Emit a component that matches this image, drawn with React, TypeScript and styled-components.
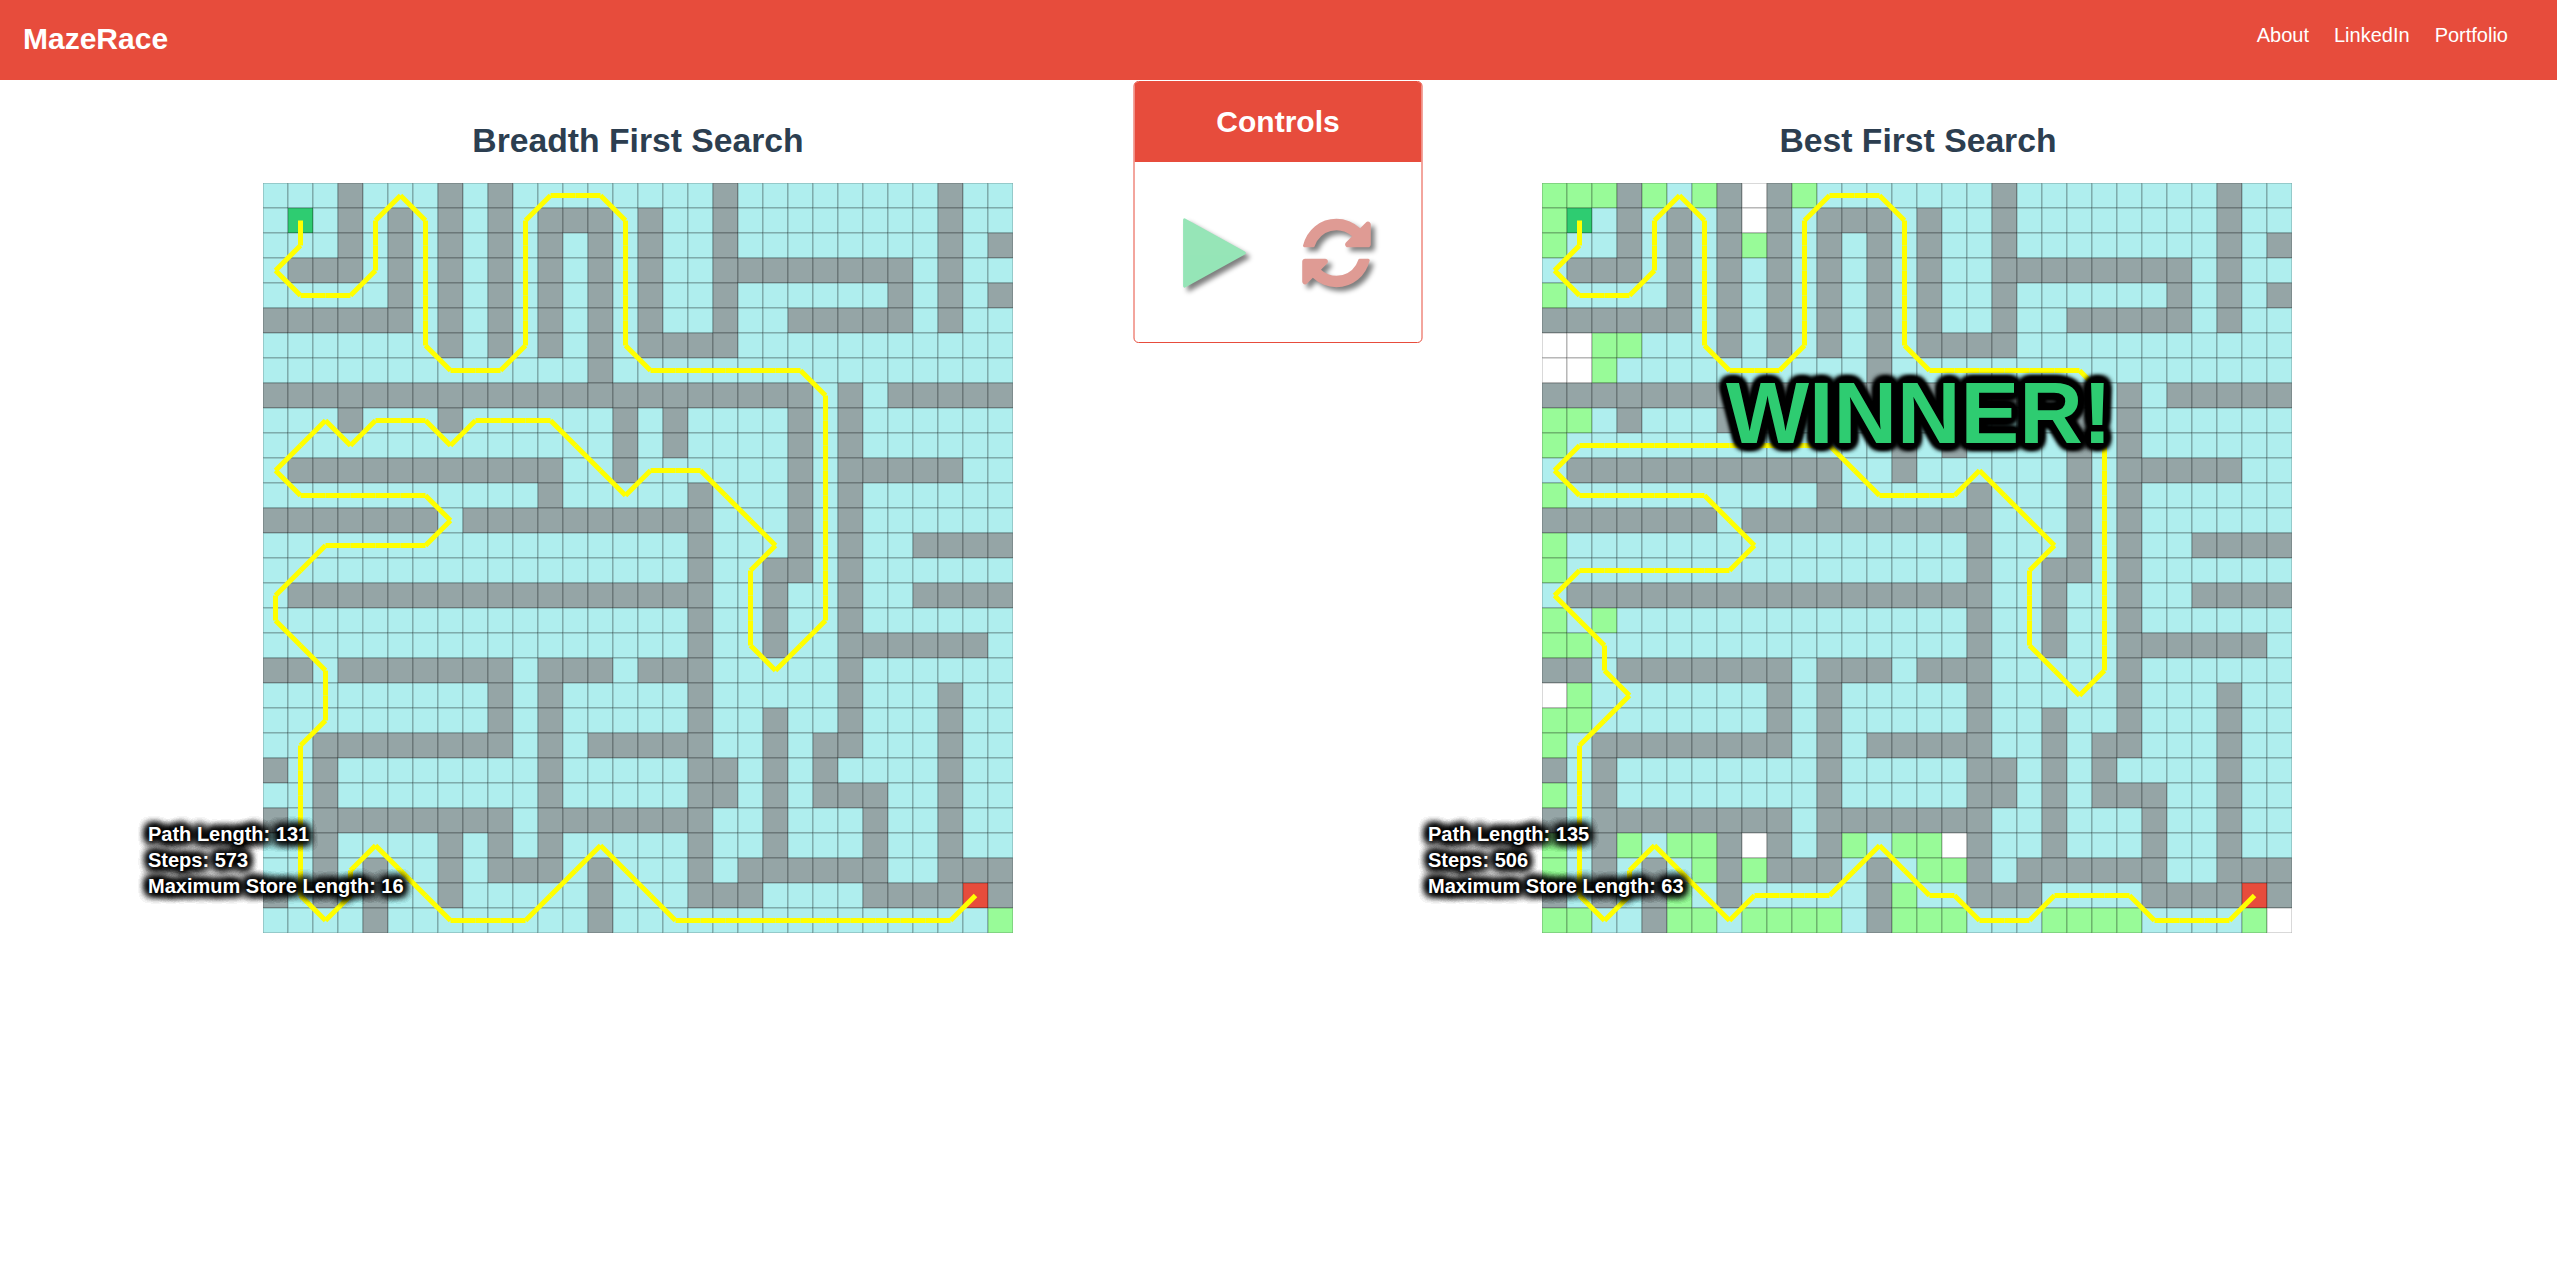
import React from 'react';
import styled, { createGlobalStyle } from 'styled-components';

const CELL = 25;
const SIZE = 30;

// A solid dark rim around large text: soft copies spread evenly on a circle.
const rim = (radius: number, blur: number, count: number): string =>
  Array.from({ length: count }, (_, i) => {
    const angle = (i / count) * Math.PI * 2;
    const x = (Math.cos(angle) * radius).toFixed(2);
    const y = (Math.sin(angle) * radius).toFixed(2);
    return `${x}px ${y}px ${blur}px #000`;
  }).join(', ');

const GlobalStyle = createGlobalStyle`
  html, body { margin: 0; padding: 0; background: #ffffff; }
  body { font-family: "Liberation Sans", Arial, Helvetica, sans-serif; overflow: hidden; }
  * { box-sizing: border-box; }
`;

const Header = styled.header`
  display: flex;
  justify-content: space-between;
  align-items: flex-start;
  height: 80px;
  padding: 23px 49px 0 23px;
  background: #e74c3c;
  color: #ffffff;
`;

const Brand = styled.h1`
  margin: 0;
  font-size: 30px;
  line-height: 32px;
  font-weight: bold;
`;

const Nav = styled.nav`
  display: flex;
  gap: 25px;
`;

const NavLink = styled.a`
  color: #ffffff;
  font-size: 20px;
  line-height: 24px;
  text-decoration: none;
`;

const Race = styled.main`
  position: relative;
  display: grid;
  grid-template-columns: 1276px 1276px;
  column-gap: 3px;
`;

const Panel = styled.section`
  position: relative;
  display: flex;
  flex-direction: column;
  align-items: center;
  padding-top: 40px;
`;

const Title = styled.h2<{ $indent: number }>`
  margin: 0 0 23px;
  padding-left: ${(p) => p.$indent}px;
  color: #2c3e50;
  font-size: 33.7px;
  line-height: 40px;
  font-weight: bold;
`;

const Board = styled.svg`
  display: block;
  overflow: hidden;
`;

const Stats = styled.div<{ $left: number }>`
  position: absolute;
  left: ${(p) => p.$left}px;
  top: 741px;
  color: #ffffff;
  font-size: 20px;
  line-height: 26px;
  font-weight: bold;
  white-space: nowrap;
  text-shadow: ${Array(10).fill('0 0 10px #000').join(', ')};
`;

const Winner = styled.div`
  position: absolute;
  left: 447px;
  top: 283px;
  color: #2ecc71;
  font-size: 88px;
  line-height: 100px;
  font-weight: bold;
  white-space: nowrap;
  text-shadow: ${rim(6, 5, 20)}, ${rim(3, 4, 8)};
`;

const Controls = styled.aside`
  position: absolute;
  left: 50%;
  top: 1px;
  width: 289px;
  height: 262px;
  margin-left: -0.5px;
  transform: translateX(-50%);
  border: 1px solid #e74c3c;
  border-radius: 5px;
  overflow: hidden;
  background: #ffffff;
`;

const ControlsTitle = styled.h3`
  margin: 0;
  background: #e74c3c;
  color: #ffffff;
  font-size: 30px;
  line-height: 80px;
  font-weight: bold;
  text-align: center;
`;

const Buttons = styled.div`
  display: flex;
  gap: 42px;
  padding: 51px 0 0 40px;
`;

const IconButton = styled.button<{ $color: string }>`
  display: block;
  width: 80px;
  height: 80px;
  padding: 0;
  border: 0;
  background: none;
  color: ${(p) => p.$color};
  opacity: 0.5;

  svg {
    display: block;
    overflow: visible;
    filter: drop-shadow(4px 4px 2.5px #000);
  }
`;

type Point = [number, number];

// Each entry lists the inclusive column ranges that are walls in that row.
const WALLS: string[] = [
  '3 7 9 18 27',
  '3 5 7 9 11-13 15 18 27',
  '3 5 7 9 11 13 15 18 27 29',
  '1-3 5 7 9 11 13 15 18-25 27',
  '5 7 9 11 13 15 18 25 27 29',
  '0-5 7 9 11 13 15 18 21-25 27',
  '7 9 11 13 15-18',
  '13',
  '0-21 23 25-29',
  '3 7 14 16 21 23',
  '14 16 21 23',
  '1-11 14 21 23-27',
  '11 17 21 23',
  '0-6 8-17 21 23',
  '17 21 23 26-29',
  '17 20-21 23',
  '1-17 20 23 26-29',
  '17 20 23',
  '17 20 23-28',
  '0-1 3-9 11-13 15-17 23',
  '9 11 17 23 27',
  '9 11 17 20 23 27',
  '2-9 11 13-17 20 22-23 27',
  '0 2 11 17-18 20 22 27',
  '2 11 17-18 20 22-24 27',
  '0 2-9 11-17 20 24 27',
  '2 7 9 11 17 20 24 27',
  '2 4 7 9-11 13 17 19-24 27-29',
  '0 2 4 7 13 17-19 24-27 29',
  '4 13',
];

const expand = (ranges: string): number[] =>
  ranges
    .split(' ')
    .filter(Boolean)
    .flatMap((part) => {
      const [a, b = a] = part.split('-').map(Number);
      return Array.from({ length: b - a + 1 }, (_, i) => a + i);
    });

const cellSet = (rows: Record<number, string>): Set<string> =>
  new Set(Object.entries(rows).flatMap(([row, ranges]) => expand(ranges).map((c) => `${c},${row}`)));

const walls = cellSet(Object.fromEntries(WALLS.map((r, i) => [i, r])));

interface Maze {
  title: string;
  titleIndent: number;
  open: Set<string>;
  blank: Set<string>;
  path: Point[];
  stats: string[];
  statsLeft: number;
  winner?: boolean;
}

const breadth: Maze = {
  title: 'Breadth First Search',
  titleIndent: 0,
  open: cellSet({ 29: '29' }),
  blank: new Set(),
  path: [
    [1, 1], [1, 2], [0, 3], [1, 4], [3, 4], [4, 3], [4, 1], [5, 0], [6, 1], [6, 6], [7, 7], [9, 7],
    [10, 6], [10, 1], [11, 0], [13, 0], [14, 1], [14, 6], [15, 7], [21, 7], [22, 8], [22, 17],
    [20, 19], [19, 18], [19, 15], [20, 14], [17, 11], [15, 11], [14, 12], [11, 9], [8, 9], [7, 10],
    [6, 9], [4, 9], [3, 10], [2, 9], [0, 11], [1, 12], [6, 12], [7, 13], [6, 14], [2, 14], [0, 16],
    [0, 17], [2, 19], [2, 21], [1, 22], [1, 28], [2, 29], [3, 28], [3, 27], [4, 26], [7, 29],
    [10, 29], [13, 26], [16, 29], [27, 29], [28, 28],
  ],
  stats: ['Path Length: 131', 'Steps: 573', 'Maximum Store Length: 16'],
  statsLeft: 148,
};

const best: Maze = {
  title: 'Best First Search',
  titleIndent: 2,
  open: cellSet({
    0: '0-2 4 6 10', 1: '0', 2: '0 8', 4: '0', 6: '2-3', 7: '2', 9: '0-1', 10: '0', 12: '0',
    14: '0', 15: '0', 17: '0 2', 18: '0-1', 20: '1', 21: '0-1', 22: '0', 24: '0',
    26: '0 3 5-6 12 14-15', 27: '0 6 8 15-16', 28: '5 14', 29: '0-1 5-6 8-11 14-16 20-23 28',
  }),
  blank: cellSet({ 0: '8', 1: '8', 6: '0-1', 7: '0-1', 20: '0', 26: '8 16', 29: '29' }),
  path: [
    [1, 1], [1, 2], [0, 3], [1, 4], [3, 4], [4, 3], [4, 1], [5, 0], [6, 1], [6, 6], [7, 7], [9, 7],
    [10, 6], [10, 1], [11, 0], [13, 0], [14, 1], [14, 6], [15, 7], [21, 7], [22, 8], [22, 19],
    [21, 20], [19, 18], [19, 15], [20, 14], [17, 11], [16, 12], [13, 12], [11, 10], [1, 10],
    [0, 11], [1, 12], [6, 12], [8, 14], [7, 15], [1, 15], [0, 16], [2, 18], [2, 19], [3, 20],
    [1, 22], [1, 28], [2, 29], [3, 28], [3, 27], [4, 26], [7, 29], [8, 28], [11, 28], [13, 26],
    [15, 28], [16, 28], [17, 29], [19, 29], [20, 28], [23, 28], [24, 29], [27, 29], [28, 28],
  ],
  stats: ['Path Length: 135', 'Steps: 506', 'Maximum Store Length: 63'],
  statsLeft: 149,
  winner: true,
};

const colorOf = (maze: Maze, x: number, y: number): string => {
  const key = `${x},${y}`;
  if (key === '1,1') return '#2ecc71';
  if (key === '28,28') return '#e74c3c';
  if (walls.has(key)) return '#95a5a6';
  if (maze.blank.has(key)) return '#ffffff';
  if (maze.open.has(key)) return '#98fb98';
  return '#afeeee';
};

// Splits the route into one-cell steps so that each is stroked on its own.
const steps = (path: Point[]): [Point, Point][] =>
  path.slice(1).flatMap(([x2, y2], i) => {
    const [x1, y1] = path[i];
    const n = Math.max(Math.abs(x2 - x1), Math.abs(y2 - y1));
    const dx = (x2 - x1) / n;
    const dy = (y2 - y1) / n;
    return Array.from({ length: n }, (_, k): [Point, Point] => [
      [x1 + dx * k, y1 + dy * k],
      [x1 + dx * (k + 1), y1 + dy * (k + 1)],
    ]);
  });

const center = (n: number): number => n * CELL + CELL / 2;

function MazeBoard({ maze }: { maze: Maze }) {
  const side = CELL * SIZE;
  const cells: Point[] = [];
  for (let x = 0; x < SIZE; x++) for (let y = 0; y < SIZE; y++) cells.push([x, y]);
  return (
    <Board width={side} height={side} viewBox={`0 0 ${side} ${side}`}>
      {cells.map(([x, y]) => (
        <rect
          key={`${x},${y}`}
          x={x * CELL}
          y={y * CELL}
          width={CELL}
          height={CELL}
          fill={colorOf(maze, x, y)}
          stroke="#000"
          strokeOpacity={0.3}
        />
      ))}
      {steps(maze.path).map(([a, b], i) => (
        <line
          key={i}
          x1={center(a[0])}
          y1={center(a[1])}
          x2={center(b[0])}
          y2={center(b[1])}
          stroke="#ffff00"
          strokeWidth={5}
        />
      ))}
    </Board>
  );
}

function MazePanel({ maze }: { maze: Maze }) {
  return (
    <Panel>
      <Title $indent={maze.titleIndent}>{maze.title}</Title>
      <MazeBoard maze={maze} />
      <Stats $left={maze.statsLeft}>
        {maze.stats.map((line) => (
          <div key={line}>{line}</div>
        ))}
      </Stats>
      {maze.winner && <Winner>WINNER!</Winner>}
    </Panel>
  );
}

const PLAY =
  'M1576 927l-1328 738q-23 13-39.5 3t-16.5-36v-1472q0-26 16.5-36t39.5 3l1328 738q23 13 23 31t-23 31z';
const REFRESH =
  'M1639 1056q0 5-1 7-64 268-268 434.5t-478 166.5q-146 0-282.5-55t-243.5-157l-129 129q-19 19-45 19t-45-19-19-45v-448q0-26 19-45t45-19h448q26 0 45 19t19 45-19 45l-137 137q71 66 161 102t187 36q134 0 250-65t186-179q11-17 53-117 8-23 30-23h192q13 0 22.5 9.5t9.5 22.5zm25-800v448q0 26-19 45t-45 19h-448q-26 0-45-19t-19-45 19-45l138-138q-148-137-349-137-134 0-250 65t-186 179q-11 17-53 117-8 23-30 23h-199q-13 0-22.5-9.5t-9.5-22.5v-7q65-268 270-434.5t480-166.5q146 0 284 55.5t245 156.5l130-129q19-19 45-19t45 19 19 45z';

function Icon({ d }: { d: string }) {
  return (
    <svg width="80" height="80" viewBox="0 0 1792 1792" fill="currentColor">
      <path d={d} />
    </svg>
  );
}

export default function App() {
  return (
    <>
      <GlobalStyle />
      <Header>
        <Brand>MazeRace</Brand>
        <Nav>
          <NavLink>About</NavLink>
          <NavLink>LinkedIn</NavLink>
          <NavLink>Portfolio</NavLink>
        </Nav>
      </Header>
      <Race>
        <MazePanel maze={breadth} />
        <MazePanel maze={best} />
        <Controls>
          <ControlsTitle>Controls</ControlsTitle>
          <Buttons>
            <IconButton $color="#2ecc71" aria-label="Start">
              <Icon d={PLAY} />
            </IconButton>
            <IconButton $color="#c0392b" aria-label="Reset">
              <Icon d={REFRESH} />
            </IconButton>
          </Buttons>
        </Controls>
      </Race>
    </>
  );
}
